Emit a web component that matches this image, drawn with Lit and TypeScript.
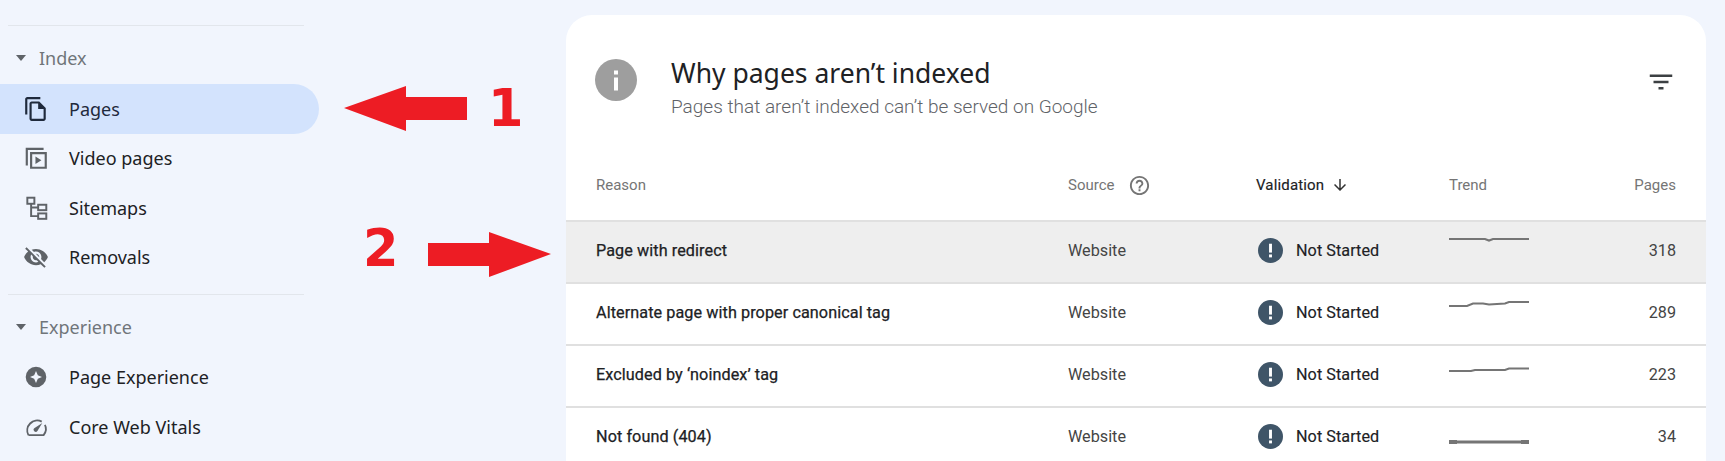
import { LitElement, css, html, svg } from "lit"
import { customElement } from "lit/decorators.js"

const NAV_ICONS: Record<string, unknown> = {
  pages: svg`<path d="M16 1H4c-1.1 0-2 .9-2 2v14h2V3h12V1zm-1 4H8c-1.1 0-1.99.9-1.99 2L6 21c0 1.1.89 2 1.99 2H19c1.1 0 2-.9 2-2V11l-6-6zM8 21V7h6v5h5v9H8z"/>`,
  video: svg`<path fill-rule="evenodd" d="M2.5 2.5H19v2H4.5V19h-2V2.5zM6.5 6.5H22V22H6.5V6.5zm2 2V20H20V8.5H8.5zM11.5 10.5v7l5.5-3.5-5.5-3.5z"/>`,
  sitemaps: svg`<g fill="none" stroke="#5f6368" stroke-width="1.8"><rect x="4" y="2.5" width="6.5" height="5.6"/><rect x="14" y="9" width="7.5" height="5"/><rect x="14" y="17" width="7.5" height="5"/><path d="M7.5 8v11.5H14M7.5 11.5H14"/></g>`,
  removals: svg`<path d="M12 7c2.76 0 5 2.24 5 5 0 .65-.13 1.26-.36 1.83l2.92 2.92c1.51-1.26 2.7-2.89 3.43-4.75-1.73-4.39-6-7.5-11-7.5-1.4 0-2.74.25-3.98.7l2.16 2.16C10.74 7.13 11.35 7 12 7zM2 4.27l2.28 2.28.46.46C3.08 8.3 1.78 10.02 1 12c1.73 4.39 6 7.5 11 7.5 1.55 0 3.03-.3 4.38-.84l.42.42L19.73 22 21 20.73 3.27 3 2 4.27zM7.53 9.8l1.55 1.55c-.05.21-.08.43-.08.65 0 1.66 1.34 3 3 3 .22 0 .44-.03.65-.08l1.55 1.55c-.67.33-1.41.53-2.2.53-2.76 0-5-2.24-5-5 0-.79.2-1.53.53-2.2zm4.31-.78l3.15 3.15.02-.16c0-1.66-1.34-3-3-3l-.17.01z"/>`,
  experience: svg`<path fill-rule="evenodd" d="M12 2.5a9.5 9.5 0 1 0 0 19 9.5 9.5 0 0 0 0-19zm0 4 1.7 3.8 3.8 1.7-3.8 1.7-1.7 3.8-1.7-3.8L6.5 12l3.8-1.7L12 6.5z"/>`,
  vitals: svg`<g fill="none" stroke="#5f6368" stroke-width="1.7"><path d="M5 19.5h14c2.6-3.4 2.6-7 1.2-9.5"/><path d="M17.3 7A9.2 9.2 0 0 0 5 19.5"/></g><path d="M17.8 8.2 10.7 13a1.9 1.9 0 1 0 2.6 2.7z"/>`,
}

const SECTIONS = [
  {
    title: "Index",
    items: [
      { label: "Pages", icon: "pages", active: true },
      { label: "Video pages", icon: "video" },
      { label: "Sitemaps", icon: "sitemaps" },
      { label: "Removals", icon: "removals" },
    ],
  },
  {
    title: "Experience",
    items: [
      { label: "Page Experience", icon: "experience" },
      { label: "Core Web Vitals", icon: "vitals" },
    ],
  },
]

const ROWS = [
  { reason: "Page with redirect", pages: 318, trend: "0,6 36,6 40,7.5 44,6 80,6", hover: true },
  { reason: "Alternate page with proper canonical tag", pages: 289, trend: "0,11 18,11 24,8.5 34,8.5 40,9.5 56,8.5 60,7 80,7" },
  { reason: "Excluded by ‘noindex’ tag", pages: 223, trend: "0,14 22,14 26,13 56,13 60,11.5 80,11.5" },
  { reason: "Not found (404)", pages: 34, trend: "0,23 80,23", flat: true },
]

@customElement("app-root")
export class AppRoot extends LitElement {
  renderSection(section: (typeof SECTIONS)[number]) {
    return html`
      <div class="divider"></div>
      <div class="section-head">
        <span class="caret"></span>
        ${section.title}
      </div>
      ${section.items.map(
        (item: { label: string; icon: string; active?: boolean }) => html`
          <div class="nav-item ${item.active ? "active" : ""}">
            <svg viewBox="0 0 24 24">${NAV_ICONS[item.icon]}</svg>
            ${item.label}
          </div>
        `,
      )}
    `
  }

  renderRow(row: (typeof ROWS)[number]) {
    return html`
      <div class="row body ${row.hover ? "hover" : ""}">
        <div class="reason">${row.reason}</div>
        <div>Website</div>
        <div class="validation">
          <svg class="status" viewBox="0 0 24 24">
            <circle cx="12" cy="12" r="12" fill="#3f5568" />
            <rect x="10.6" y="5.5" width="2.8" height="8.5" fill="#fff" />
            <rect x="10.6" y="15.8" width="2.8" height="2.8" fill="#fff" />
          </svg>
          Not Started
        </div>
        <svg class="spark ${row.flat ? "flat" : ""}" viewBox="0 0 80 16">
          <polyline points=${row.trend} />
          ${row.flat ? svg`<polyline class="ends" points=${row.trend} />` : ""}
        </svg>
        <div class="num">${row.pages}</div>
      </div>
    `
  }

  render() {
    return html`
      <nav class="sidebar">${SECTIONS.map((s) => this.renderSection(s))}</nav>

      <main class="card">
        <header class="card-head">
          <svg class="info" viewBox="0 0 42 42">
            <circle cx="21" cy="21" r="21" fill="#9e9e9e" />
            <rect x="19" y="18.5" width="4" height="13" fill="#fff" />
            <rect x="19" y="11.5" width="4" height="4" fill="#fff" />
          </svg>
          <div class="titles">
            <h1>Why pages aren’t indexed</h1>
            <p>Pages that aren’t indexed can’t be served on Google</p>
          </div>
          <svg class="filter" viewBox="0 0 24 24">
            <path d="M10 18h4v-2h-4v2zM3 6v2h18V6H3zm3 7h12v-2H6v2z" />
          </svg>
        </header>

        <div class="row head">
          <div>Reason</div>
          <div class="with-icon">
            Source
            <svg class="help" viewBox="0 0 24 24">
              <path d="M11 18h2v-2h-2v2zm1-16C6.48 2 2 6.48 2 12s4.48 10 10 10 10-4.48 10-10S17.52 2 12 2zm0 18c-4.41 0-8-3.59-8-8s3.59-8 8-8 8 3.59 8 8-3.59 8-8 8zm0-14c-2.21 0-4 1.79-4 4h2c0-1.1.9-2 2-2s2 .9 2 2c0 2-3 1.75-3 5h2c0-2.25 3-2.5 3-5 0-2.21-1.79-4-4-4z" />
            </svg>
          </div>
          <div class="with-icon sorted">
            Validation
            <svg class="sort" viewBox="0 0 24 24">
              <path d="M20 12l-1.41-1.41L13 16.17V4h-2v12.17l-5.58-5.59L4 12l8 8 8-8z" />
            </svg>
          </div>
          <div>Trend</div>
          <div class="num">Pages</div>
        </div>
        ${ROWS.map((r) => this.renderRow(r))}
      </main>

      <svg class="arrows" viewBox="0 0 1725 461">
        <polygon points="344,108 406,86 406,97 467,97 467,120 406,120 406,131" />
        <polygon points="428,243 489,243 489,232 551,254 489,277 489,266 428,266" />
      </svg>
      <span class="mark one">1</span>
      <span class="mark two">2</span>
    `
  }

  static styles = css`
    :host {
      position: relative;
      display: flex;
      align-items: flex-start;
      width: 1725px;
      height: 461px;
      overflow: hidden;
      background: #f1f5fd;
      font-family: Roboto, sans-serif;
      color: #1f1f1f;
    }
    .sidebar {
      flex: none;
      width: 319px;
      margin-right: 247px;
      padding-top: 25px;
      font-family: "Noto Sans", sans-serif;
      font-size: 18px;
    }
    .divider {
      width: 296px;
      height: 1px;
      margin-left: 8px;
      background: #e2e6ec;
    }
    .nav-item + .divider {
      margin-top: 11.5px;
    }
    .section-head {
      display: flex;
      align-items: center;
      height: 44px;
      margin: 10px 0 4px;
      padding-left: 16px;
      color: #70757a;
    }
    .caret {
      width: 0;
      height: 0;
      margin-right: 13px;
      border: 5.5px solid transparent;
      border-top: 6px solid #5f6368;
      border-bottom: 0;
    }
    .nav-item {
      display: flex;
      align-items: center;
      gap: 20px;
      height: 49.5px;
      padding-left: 23px;
      border-radius: 0 25px 25px 0;
      color: #202124;
    }
    .nav-item svg {
      width: 26px;
      height: 26px;
      fill: #5f6368;
    }
    .nav-item.active {
      background: #d3e3fd;
      color: #1f2a3c;
    }
    .nav-item.active svg {
      fill: #1f2a3c;
    }

    .card {
      flex: none;
      width: 1140px;
      margin-top: 15px;
      background: #fff;
      border-radius: 26px 26px 0 0;
      overflow: hidden;
    }
    .card-head {
      box-sizing: border-box;
      display: flex;
      align-items: flex-start;
      height: 134px;
      padding: 44px 30px 0 29px;
    }
    .info {
      flex: none;
      width: 42px;
      height: 42px;
      margin-right: 34px;
    }
    .titles {
      flex: 1;
    }
    h1 {
      margin: -2px 0 0;
      font-family: "Noto Sans", sans-serif;
      font-size: 26.5px;
      font-weight: 400;
      line-height: 32px;
      color: #202124;
    }
    p {
      margin: 6px 0 0;
      font-size: 19px;
      font-weight: 300;
      line-height: 24px;
      color: #5f6368;
    }
    .filter {
      width: 30px;
      height: 30px;
      margin: 8px 0 0;
      fill: #3c4043;
    }

    .row {
      display: grid;
      grid-template-columns: 472px 188px 193px 1fr auto;
      align-items: center;
      padding: 0 30px;
      font-size: 16.2px;
    }
    .row.head {
      box-sizing: border-box;
      height: 71px;
      padding-top: 1px;
      color: #757575;
      font-size: 15px;
    }
    .row.body {
      box-sizing: border-box;
      height: 62px;
      padding-bottom: 4px;
      border-top: 2px solid #e0e0e0;
      color: #444;
    }
    .row.hover {
      background: #eeeeee;
    }
    .reason {
      letter-spacing: 0.08px;
      -webkit-text-stroke: 0.25px;
      color: #202124;
    }
    .with-icon {
      display: flex;
      align-items: center;
    }
    .help {
      width: 23px;
      height: 23px;
      margin-left: 14px;
      fill: #757575;
    }
    .sorted {
      letter-spacing: 0.15px;
      -webkit-text-stroke: 0.15px;
      color: #202124;
    }
    .sort {
      width: 18px;
      height: 18px;
      margin-left: 7px;
      fill: #333;
    }
    .validation {
      display: flex;
      align-items: center;
      gap: 13px;
      letter-spacing: 0.05px;
      -webkit-text-stroke: 0.15px;
      color: #202124;
    }
    .status {
      width: 25px;
      height: 25px;
      flex: none;
      margin-left: 2px;
    }
    .spark {
      display: block;
      width: 80px;
      height: 16px;
      margin-top: -19px;
      overflow: visible;
    }
    .spark polyline {
      fill: none;
      stroke: #757575;
      stroke-width: 2.2;
    }
    .spark.flat polyline {
      stroke-width: 3;
    }
    .spark.flat polyline.ends {
      stroke-width: 4;
      stroke-dasharray: 8 64 8;
    }
    .num {
      text-align: right;
    }

    .arrows {
      position: absolute;
      inset: 0;
      width: 1725px;
      height: 461px;
      fill: #ed1c24;
      pointer-events: none;
    }
    .mark {
      position: absolute;
      font-family: "DejaVu Sans", sans-serif;
      font-size: 51px;
      font-weight: 700;
      line-height: 60px;
      color: #ed1c24;
    }
    .mark.one {
      left: 488px;
      top: 79px;
    }
    .mark.two {
      left: 363px;
      top: 219px;
    }
  `
}

declare global {
  interface HTMLElementTagNameMap {
    "app-root": AppRoot
  }
}
